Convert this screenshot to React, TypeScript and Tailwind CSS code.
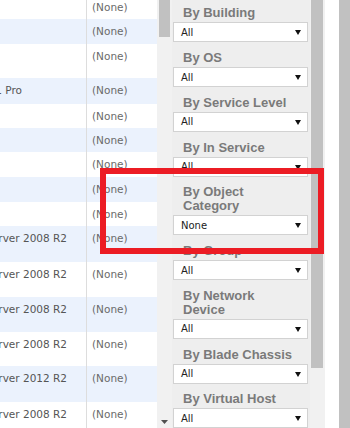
const rows = [
  { h: "h-[24px]", os: "" },
  { h: "h-[25px]", os: "" },
  { h: "h-[34px]", os: "" },
  { h: "h-[26px]", os: "Windows 8.1 Pro" },
  { h: "h-[24px]", os: "" },
  { h: "h-[24px]", os: "" },
  { h: "h-[25px]", os: "" },
  { h: "h-[25px]", os: "" },
  { h: "h-[24px]", os: "" },
  { h: "h-[36px]", os: "Windows Server 2008 R2" },
  { h: "h-[35px]", os: "Windows Server 2008 R2" },
  { h: "h-[35px]", os: "Windows Server 2008 R2" },
  { h: "h-[34px]", os: "Windows Server 2008 R2" },
  { h: "h-[36px]", os: "Windows Server 2012 R2" },
  { h: "h-[36px]", os: "Windows Server 2008 R2" },
]

const filters = [
  { label: "By Building", value: "All" },
  { label: "By OS", value: "All" },
  { label: "By Service Level", value: "All" },
  { label: "By In Service", value: "All" },
  { label: "By Object Category", value: "None" },
  { label: "By Group", value: "All" },
  { label: "By Network Device", value: "All" },
  { label: "By Blade Chassis", value: "All" },
  { label: "By Virtual Host", value: "All" },
]

const FakeSelect = ({ value }: { value: string }) => (
  <div className="ml-[1px] w-[135px] h-[20px] bg-white border border-[#d2d2d2] flex items-center justify-between pl-[7px] pr-[6px] pt-[1px]">
    <span className="text-[10px] leading-none text-[#222] font-['DejaVu_Sans',sans-serif]">{value}</span>
    <svg width="6" height="5" viewBox="0 0 6 5">
      <polygon points="0,0 6,0 3,5" fill="#111" />
    </svg>
  </div>
)

const App = () => {
  return (
    <div className="relative w-[350px] h-[428px] overflow-hidden flex bg-white">
      {/* results table, scrolled sideways */}
      <div className="w-[157px] h-full overflow-hidden bg-white">
        <div className="-mt-[5px] font-['DejaVu_Sans',sans-serif] text-[10.5px] leading-[14px]">
          {rows.map((r, i) => (
            <div key={i} className={`flex ${r.h} ${i % 2 === 1 ? "bg-[#ebf2fd]" : "bg-white"}`}>
              <div className="w-[87px] shrink-0 overflow-hidden border-r border-[#dddddd] pt-[5px]">
                <div className="-ml-[65px] whitespace-nowrap text-[#555]">{r.os}</div>
              </div>
              <div className="flex-1 pl-[5px] pt-[5px] text-[#6a6a6a]">(None)</div>
            </div>
          ))}
        </div>
      </div>

      {/* table scrollbar */}
      <div className="w-[15px] h-full bg-[#f1f1f1] flex flex-col justify-between items-center">
        <div className="w-[11px] h-[37px] bg-[#c1c1c1]" />
        <svg width="7" height="4" viewBox="0 0 7 4" className="mb-[4px]">
          <polygon points="0,0 7,0 3.5,4" fill="#505050" />
        </svg>
      </div>

      {/* filter panel */}
      <div className="w-[138px] h-full bg-[#eeeeee] overflow-hidden">
        <div className="-mt-[2.5px]">
          {filters.map((f) => (
            <div key={f.label}>
              <div className="pt-[8.75px] mb-[2px] pl-[11px] w-[124px] text-[13px] leading-[14px] font-bold text-[#7a7a7a] font-['Liberation_Sans',sans-serif]">
                {f.label}
              </div>
              <FakeSelect value={f.value} />
            </div>
          ))}
        </div>
      </div>

      {/* panel scrollbar */}
      <div className="w-[15px] h-full bg-[#f1f1f1]">
        <div className="ml-[1px] w-[12px] h-[368px] bg-[#c1c1c1]" />
      </div>

      <div className="w-[14px] h-full bg-white" />
      <div className="w-[11px] h-full bg-[#c1c1c1]" />

      {/* annotation */}
      <div className="absolute left-[100px] top-[168px] w-[224px] h-[86px] border-[6px] border-[#ec1c24]" />
    </div>
  )
}

export default App
